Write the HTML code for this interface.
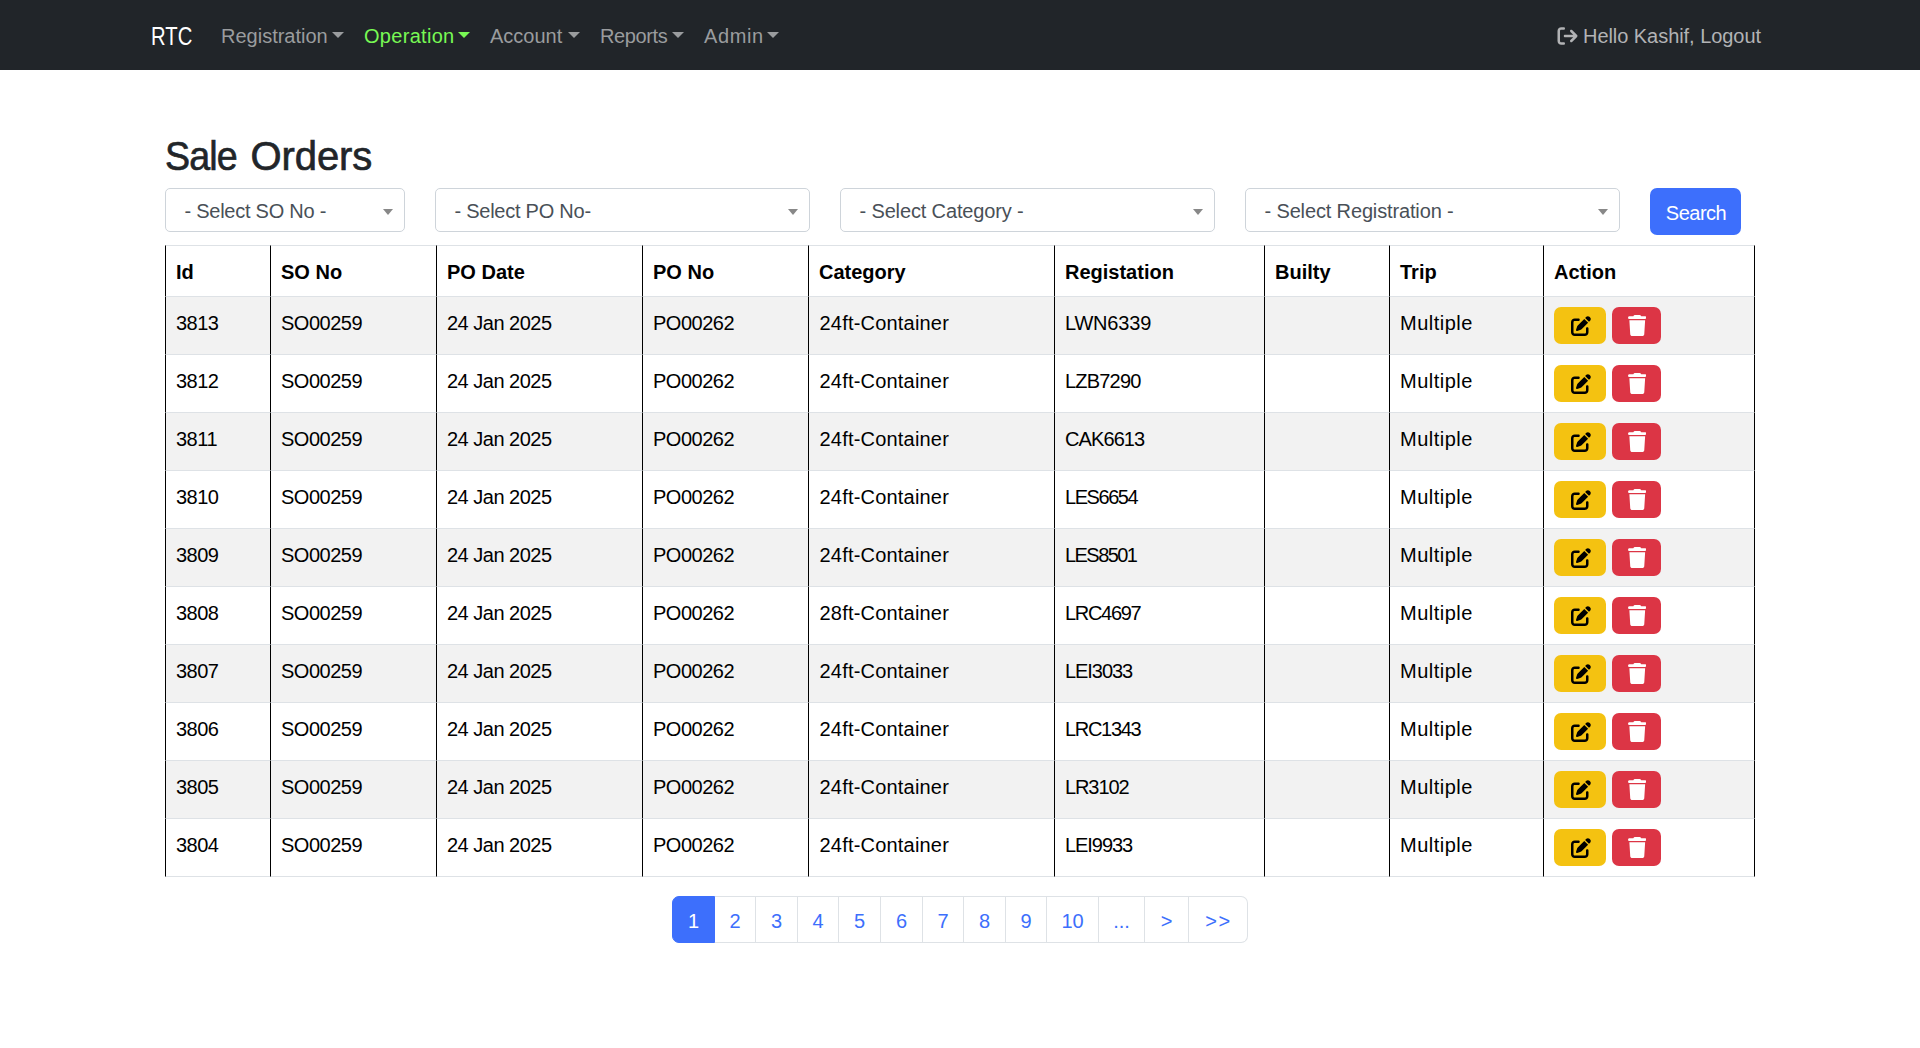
<!DOCTYPE html>
<html lang="en">
<head>
<meta charset="utf-8">
<title>Sale Orders</title>
<style>
*{box-sizing:border-box;}
html,body{margin:0;padding:0;}
body{width:1920px;height:1048px;overflow:hidden;background:#fff;color:#212529;
  font-family:"Liberation Sans",sans-serif;font-size:20px;line-height:30px;position:relative;}
a{text-decoration:none;color:inherit;}
/* ---------- navbar ---------- */
.navbar{position:absolute;left:0;top:0;width:1920px;height:70px;background:#212529;}
.navbar a{position:absolute;top:21px;height:30px;line-height:30px;white-space:nowrap;color:#9a9c9e;}
.navbar .brand{left:150.5px;top:17px;height:38px;line-height:38px;font-size:25px;color:#fff;transform:scaleX(.81);transform-origin:0 50%;}
.navbar .active{color:#78f954;}
.caret{display:inline-block;width:0;height:0;border-top:6px solid currentColor;border-left:6px solid transparent;border-right:6px solid transparent;margin-left:4px;vertical-align:5px;}
.navbar .logout{left:1557px;color:#b2b3b5;}
.navbar .logout svg{position:absolute;left:0;top:4.5px;width:21px;height:20px;fill:currentColor;}
.navbar .logout span{position:absolute;left:26px;top:0;letter-spacing:-.05px;}
/* ---------- heading ---------- */
h1{position:absolute;left:165px;top:132px;margin:0;font-size:40px;line-height:48px;font-weight:400;color:#212529;-webkit-text-stroke:.65px #212529;letter-spacing:0;white-space:nowrap;}
/* ---------- filters ---------- */
.sel{position:absolute;top:188px;height:44px;border:1px solid #ced4da;border-radius:5px;background:#fff;color:#495057;padding-left:18.5px;line-height:44px;white-space:nowrap;letter-spacing:-.14px;}
.sel i{position:absolute;right:11px;top:20px;width:0;height:0;border-top:6px solid #888;border-left:5px solid transparent;border-right:5px solid transparent;}
.btn-search{position:absolute;left:1650px;top:188px;width:91px;height:47px;border-radius:7px;background:#3d6ffc;color:#fff;text-align:center;line-height:51px;letter-spacing:-.5px;padding-left:1px;}
/* ---------- table ---------- */
table{position:absolute;left:165px;top:245px;width:1590px;border-collapse:separate;border-spacing:0;table-layout:fixed;color:#000;}
th,td{padding:0 0 0 10px;text-align:left;vertical-align:top;border-left:1px solid #000;border-bottom:1px solid #dee2e6;white-space:nowrap;overflow:hidden;}
th:last-child,td:last-child{border-right:1px solid #000;}
th{height:52px;border-top:1px solid #dee2e6;font-weight:700;padding-top:11px;}
td{height:58px;padding-top:11px;}
tbody tr:nth-child(odd) td{background:#f2f2f2;}
td:nth-child(-n+4){letter-spacing:-.5px;}
td:nth-child(5){letter-spacing:.2px;padding-left:10.5px;}
td:nth-child(8){letter-spacing:.5px;}
.b{display:inline-block;vertical-align:top;height:37px;border-radius:7px;margin-top:-1px;position:relative;}
.b svg{position:absolute;fill:currentColor;}
.b.e{width:52px;background:#f4c211;color:#000;margin-right:6px;}
.b.e svg{left:16.5px;top:8.5px;width:20px;height:20px;}
.b.d{width:49px;background:#dc3545;color:#fff;}
.b.d svg{left:15.5px;top:8px;width:18.5px;height:21px;}
/* ---------- pagination ---------- */
.pg{position:absolute;left:672px;top:896px;height:47px;margin:0;padding:0;list-style:none;display:flex;}
.pg li{height:47px;border:1px solid #dee2e6;border-left-width:0;color:#3d6ffc;text-align:center;line-height:49px;background:#fff;}
.pg li:first-child{border:1px solid #3d6ffc;background:#3d6ffc;color:#fff;border-radius:7px 0 0 7px;}
.pg li:last-child{border-radius:0 7px 7px 0;}
</style>
</head>
<body>
<nav class="navbar">
  <a class="brand" href="#">RTC</a>
  <a href="#" style="left:221px">Registration<b class="caret"></b></a>
  <a href="#" class="active" style="left:364px;letter-spacing:.3px">Operation<b class="caret" style="margin-left:3px"></b></a>
  <a href="#" style="left:490px">Account<b class="caret" style="margin-left:6px"></b></a>
  <a href="#" style="left:600px;letter-spacing:-.4px">Reports<b class="caret" style="margin-left:4.5px"></b></a>
  <a href="#" style="left:704px;letter-spacing:.6px">Admin<b class="caret" style="margin-left:3px"></b></a>
  <a href="#" class="logout"><svg viewBox="0 0 512 512"><path d="M502.6 278.6c12.500-12.500 12.500-32.800 0-45.300l-128-128c-12.500-12.500-32.800-12.500-45.300 0s-12.500 32.800 0 45.300L402.700 224 192 224c-17.700 0-32 14.300-32 32s14.300 32 32 32l210.700 0-73.400 73.400c-12.500 12.500-12.500 32.800 0 45.300s32.800 12.500 45.300 0l128-128zM160 96c17.700 0 32-14.300 32-32s-14.300-32-32-32L96 32C43 32 0 75 0 128L0 384c0 53 43 96 96 96l64 0c17.700 0 32-14.300 32-32s-14.300-32-32-32l-64 0c-17.700 0-32-14.300-32-32l0-256c0-17.700 14.300-32 32-32l64 0z"/></svg><span>Hello Kashif, Logout</span></a>
</nav>

<h1><span style="display:inline-block;letter-spacing:-.9px;transform:scaleX(.94);transform-origin:0 50%">Sale</span> <span style="letter-spacing:-.1px;margin-left:-2px">Orders</span></h1>

<div class="sel" style="left:165px;width:240px;letter-spacing:-.25px">- Select SO No -<i></i></div>
<div class="sel" style="left:435px;width:375px;letter-spacing:-.25px">- Select PO No-<i></i></div>
<div class="sel" style="left:840px;width:375px">- Select Category -<i></i></div>
<div class="sel" style="left:1245px;width:375px">- Select Registration -<i></i></div>
<a class="btn-search" href="#">Search</a>

<table>
<colgroup><col style="width:105px"><col style="width:166px"><col style="width:206px"><col style="width:166px"><col style="width:246px"><col style="width:210px"><col style="width:125px"><col style="width:154px"><col style="width:212px"></colgroup>
<thead><tr><th>Id</th><th>SO No</th><th>PO Date</th><th>PO No</th><th>Category</th><th>Registation</th><th>Builty</th><th>Trip</th><th>Action</th></tr></thead>
<tbody>
<tr><td>3813</td><td>SO00259</td><td>24 Jan 2025</td><td>PO00262</td><td>24ft-Container</td><td style="letter-spacing:-0.2px">LWN6339</td><td></td><td>Multiple</td><td><a class="b e" href="#"><svg viewBox="0 0 512 512"><path d="M471.6 21.7c-21.9-21.9-57.3-21.9-79.2 0L362.3 51.7l97.900 97.900 30.100-30.100c21.900-21.900 21.900-57.300 0-79.200L471.600 21.700zm-299.200 220c-6.100 6.100-10.800 13.600-13.500 21.900l-29.600 88.800c-2.900 8.600-.6 18.100 5.800 24.600s15.900 8.700 24.600 5.800l88.800-29.600c8.200-2.700 15.700-7.400 21.900-13.500L437.700 172.300 339.700 74.300 172.400 241.700zM96 64C43 64 0 107 0 160V416c0 53 43 96 96 96H352c53 0 96-43 96-96V320c0-17.700-14.300-32-32-32s-32 14.300-32 32v96c0 17.700-14.300 32-32 32H96c-17.700 0-32-14.300-32-32V160c0-17.700 14.300-32 32-32h96c17.700 0 32-14.300 32-32s-14.300-32-32-32H96z"/></svg></a><a class="b d" href="#"><svg viewBox="0 0 448 512"><path d="M135.2 17.7L128 32H32C14.300 32 0 46.300 0 64S14.300 96 32 96H416c17.700 0 32-14.300 32-32s-14.300-32-32-32H320l-7.200-14.300C307.400 6.800 296.300 0 284.200 0H163.800c-12.100 0-23.200 6.800-28.600 17.700zM416 128H32L53.200 467c1.600 25.300 22.600 45 47.900 45H346.900c25.300 0 46.300-19.700 47.900-45L416 128z"/></svg></a></td></tr>
<tr><td>3812</td><td>SO00259</td><td>24 Jan 2025</td><td>PO00262</td><td>24ft-Container</td><td style="letter-spacing:-0.8px">LZB7290</td><td></td><td>Multiple</td><td><a class="b e" href="#"><svg viewBox="0 0 512 512"><path d="M471.6 21.7c-21.9-21.9-57.3-21.9-79.2 0L362.3 51.7l97.900 97.900 30.100-30.100c21.900-21.900 21.900-57.300 0-79.200L471.600 21.700zm-299.200 220c-6.100 6.100-10.800 13.600-13.500 21.900l-29.600 88.800c-2.900 8.600-.6 18.100 5.800 24.600s15.900 8.700 24.600 5.800l88.800-29.600c8.200-2.700 15.700-7.400 21.900-13.500L437.700 172.300 339.700 74.300 172.400 241.700zM96 64C43 64 0 107 0 160V416c0 53 43 96 96 96H352c53 0 96-43 96-96V320c0-17.700-14.300-32-32-32s-32 14.300-32 32v96c0 17.700-14.300 32-32 32H96c-17.700 0-32-14.300-32-32V160c0-17.700 14.300-32 32-32h96c17.700 0 32-14.300 32-32s-14.300-32-32-32H96z"/></svg></a><a class="b d" href="#"><svg viewBox="0 0 448 512"><path d="M135.2 17.7L128 32H32C14.300 32 0 46.300 0 64S14.300 96 32 96H416c17.700 0 32-14.300 32-32s-14.300-32-32-32H320l-7.200-14.300C307.400 6.800 296.300 0 284.200 0H163.800c-12.100 0-23.200 6.800-28.600 17.700zM416 128H32L53.200 467c1.600 25.300 22.600 45 47.900 45H346.900c25.300 0 46.300-19.700 47.900-45L416 128z"/></svg></a></td></tr>
<tr><td>3811</td><td>SO00259</td><td>24 Jan 2025</td><td>PO00262</td><td>24ft-Container</td><td style="letter-spacing:-0.9px">CAK6613</td><td></td><td>Multiple</td><td><a class="b e" href="#"><svg viewBox="0 0 512 512"><path d="M471.6 21.7c-21.9-21.9-57.3-21.9-79.2 0L362.3 51.7l97.900 97.900 30.100-30.100c21.900-21.900 21.900-57.300 0-79.200L471.600 21.700zm-299.200 220c-6.100 6.100-10.800 13.600-13.500 21.900l-29.600 88.800c-2.900 8.600-.6 18.100 5.800 24.600s15.900 8.700 24.600 5.800l88.800-29.600c8.200-2.700 15.700-7.400 21.900-13.500L437.700 172.300 339.700 74.300 172.400 241.700zM96 64C43 64 0 107 0 160V416c0 53 43 96 96 96H352c53 0 96-43 96-96V320c0-17.700-14.300-32-32-32s-32 14.300-32 32v96c0 17.700-14.300 32-32 32H96c-17.700 0-32-14.300-32-32V160c0-17.700 14.300-32 32-32h96c17.700 0 32-14.300 32-32s-14.300-32-32-32H96z"/></svg></a><a class="b d" href="#"><svg viewBox="0 0 448 512"><path d="M135.2 17.7L128 32H32C14.300 32 0 46.300 0 64S14.300 96 32 96H416c17.700 0 32-14.300 32-32s-14.300-32-32-32H320l-7.200-14.300C307.400 6.800 296.300 0 284.200 0H163.800c-12.100 0-23.200 6.800-28.600 17.700zM416 128H32L53.200 467c1.600 25.300 22.600 45 47.900 45H346.900c25.300 0 46.300-19.700 47.900-45L416 128z"/></svg></a></td></tr>
<tr><td>3810</td><td>SO00259</td><td>24 Jan 2025</td><td>PO00262</td><td>24ft-Container</td><td style="letter-spacing:-1.45px">LES6654</td><td></td><td>Multiple</td><td><a class="b e" href="#"><svg viewBox="0 0 512 512"><path d="M471.6 21.7c-21.9-21.9-57.3-21.9-79.2 0L362.3 51.7l97.900 97.900 30.100-30.100c21.900-21.900 21.900-57.300 0-79.200L471.600 21.700zm-299.200 220c-6.100 6.100-10.800 13.600-13.500 21.900l-29.600 88.800c-2.900 8.600-.6 18.100 5.800 24.600s15.900 8.700 24.600 5.800l88.800-29.600c8.200-2.700 15.700-7.400 21.900-13.500L437.700 172.300 339.700 74.300 172.400 241.700zM96 64C43 64 0 107 0 160V416c0 53 43 96 96 96H352c53 0 96-43 96-96V320c0-17.700-14.300-32-32-32s-32 14.300-32 32v96c0 17.700-14.300 32-32 32H96c-17.700 0-32-14.300-32-32V160c0-17.700 14.300-32 32-32h96c17.700 0 32-14.300 32-32s-14.300-32-32-32H96z"/></svg></a><a class="b d" href="#"><svg viewBox="0 0 448 512"><path d="M135.2 17.7L128 32H32C14.300 32 0 46.300 0 64S14.300 96 32 96H416c17.700 0 32-14.300 32-32s-14.300-32-32-32H320l-7.200-14.300C307.400 6.800 296.300 0 284.200 0H163.800c-12.100 0-23.200 6.800-28.600 17.700zM416 128H32L53.200 467c1.600 25.300 22.600 45 47.900 45H346.900c25.300 0 46.300-19.700 47.900-45L416 128z"/></svg></a></td></tr>
<tr><td>3809</td><td>SO00259</td><td>24 Jan 2025</td><td>PO00262</td><td>24ft-Container</td><td style="letter-spacing:-1.55px">LES8501</td><td></td><td>Multiple</td><td><a class="b e" href="#"><svg viewBox="0 0 512 512"><path d="M471.6 21.7c-21.9-21.9-57.3-21.9-79.2 0L362.3 51.7l97.900 97.900 30.100-30.100c21.900-21.900 21.900-57.300 0-79.200L471.600 21.700zm-299.200 220c-6.100 6.100-10.800 13.600-13.500 21.900l-29.600 88.800c-2.900 8.600-.6 18.100 5.800 24.600s15.900 8.700 24.600 5.800l88.800-29.600c8.200-2.700 15.700-7.400 21.900-13.500L437.700 172.300 339.700 74.300 172.400 241.700zM96 64C43 64 0 107 0 160V416c0 53 43 96 96 96H352c53 0 96-43 96-96V320c0-17.700-14.300-32-32-32s-32 14.300-32 32v96c0 17.700-14.300 32-32 32H96c-17.700 0-32-14.300-32-32V160c0-17.700 14.300-32 32-32h96c17.700 0 32-14.300 32-32s-14.300-32-32-32H96z"/></svg></a><a class="b d" href="#"><svg viewBox="0 0 448 512"><path d="M135.2 17.7L128 32H32C14.300 32 0 46.300 0 64S14.300 96 32 96H416c17.700 0 32-14.300 32-32s-14.300-32-32-32H320l-7.200-14.300C307.400 6.800 296.300 0 284.200 0H163.800c-12.100 0-23.200 6.800-28.600 17.700zM416 128H32L53.200 467c1.600 25.300 22.600 45 47.900 45H346.900c25.300 0 46.300-19.700 47.900-45L416 128z"/></svg></a></td></tr>
<tr><td>3808</td><td>SO00259</td><td>24 Jan 2025</td><td>PO00262</td><td>28ft-Container</td><td style="letter-spacing:-1.3px">LRC4697</td><td></td><td>Multiple</td><td><a class="b e" href="#"><svg viewBox="0 0 512 512"><path d="M471.6 21.7c-21.9-21.9-57.3-21.9-79.2 0L362.3 51.7l97.900 97.900 30.100-30.100c21.900-21.900 21.900-57.300 0-79.200L471.600 21.700zm-299.200 220c-6.100 6.100-10.800 13.600-13.500 21.900l-29.600 88.800c-2.900 8.600-.6 18.100 5.800 24.600s15.900 8.700 24.600 5.800l88.800-29.600c8.200-2.700 15.700-7.400 21.900-13.500L437.700 172.300 339.700 74.300 172.400 241.700zM96 64C43 64 0 107 0 160V416c0 53 43 96 96 96H352c53 0 96-43 96-96V320c0-17.700-14.300-32-32-32s-32 14.300-32 32v96c0 17.700-14.300 32-32 32H96c-17.700 0-32-14.300-32-32V160c0-17.700 14.300-32 32-32h96c17.700 0 32-14.300 32-32s-14.300-32-32-32H96z"/></svg></a><a class="b d" href="#"><svg viewBox="0 0 448 512"><path d="M135.2 17.7L128 32H32C14.300 32 0 46.300 0 64S14.300 96 32 96H416c17.700 0 32-14.300 32-32s-14.300-32-32-32H320l-7.200-14.300C307.400 6.800 296.300 0 284.200 0H163.800c-12.100 0-23.200 6.800-28.600 17.700zM416 128H32L53.200 467c1.600 25.300 22.600 45 47.900 45H346.900c25.300 0 46.300-19.700 47.900-45L416 128z"/></svg></a></td></tr>
<tr><td>3807</td><td>SO00259</td><td>24 Jan 2025</td><td>PO00262</td><td>24ft-Container</td><td style="letter-spacing:-1.05px">LEI3033</td><td></td><td>Multiple</td><td><a class="b e" href="#"><svg viewBox="0 0 512 512"><path d="M471.6 21.7c-21.9-21.9-57.3-21.9-79.2 0L362.3 51.7l97.900 97.900 30.100-30.100c21.900-21.900 21.900-57.300 0-79.200L471.600 21.700zm-299.200 220c-6.100 6.100-10.800 13.600-13.500 21.900l-29.600 88.800c-2.900 8.600-.6 18.100 5.800 24.600s15.900 8.700 24.600 5.800l88.800-29.600c8.200-2.700 15.700-7.400 21.900-13.500L437.700 172.300 339.700 74.300 172.400 241.700zM96 64C43 64 0 107 0 160V416c0 53 43 96 96 96H352c53 0 96-43 96-96V320c0-17.700-14.300-32-32-32s-32 14.300-32 32v96c0 17.700-14.300 32-32 32H96c-17.700 0-32-14.300-32-32V160c0-17.700 14.300-32 32-32h96c17.700 0 32-14.300 32-32s-14.300-32-32-32H96z"/></svg></a><a class="b d" href="#"><svg viewBox="0 0 448 512"><path d="M135.2 17.7L128 32H32C14.300 32 0 46.300 0 64S14.300 96 32 96H416c17.700 0 32-14.300 32-32s-14.300-32-32-32H320l-7.200-14.300C307.400 6.800 296.300 0 284.200 0H163.800c-12.100 0-23.200 6.800-28.600 17.700zM416 128H32L53.200 467c1.600 25.300 22.600 45 47.900 45H346.900c25.300 0 46.300-19.700 47.900-45L416 128z"/></svg></a></td></tr>
<tr><td>3806</td><td>SO00259</td><td>24 Jan 2025</td><td>PO00262</td><td>24ft-Container</td><td style="letter-spacing:-1.3px">LRC1343</td><td></td><td>Multiple</td><td><a class="b e" href="#"><svg viewBox="0 0 512 512"><path d="M471.6 21.7c-21.9-21.9-57.3-21.9-79.2 0L362.3 51.7l97.900 97.900 30.100-30.100c21.900-21.900 21.900-57.300 0-79.200L471.600 21.700zm-299.200 220c-6.100 6.100-10.800 13.600-13.500 21.900l-29.600 88.800c-2.900 8.600-.6 18.100 5.800 24.600s15.900 8.700 24.600 5.800l88.800-29.600c8.200-2.700 15.700-7.400 21.900-13.500L437.700 172.300 339.700 74.300 172.400 241.700zM96 64C43 64 0 107 0 160V416c0 53 43 96 96 96H352c53 0 96-43 96-96V320c0-17.700-14.300-32-32-32s-32 14.300-32 32v96c0 17.700-14.300 32-32 32H96c-17.700 0-32-14.300-32-32V160c0-17.700 14.300-32 32-32h96c17.700 0 32-14.300 32-32s-14.300-32-32-32H96z"/></svg></a><a class="b d" href="#"><svg viewBox="0 0 448 512"><path d="M135.2 17.7L128 32H32C14.300 32 0 46.300 0 64S14.300 96 32 96H416c17.700 0 32-14.300 32-32s-14.300-32-32-32H320l-7.200-14.300C307.400 6.800 296.300 0 284.200 0H163.800c-12.100 0-23.200 6.800-28.600 17.700zM416 128H32L53.200 467c1.600 25.300 22.600 45 47.900 45H346.900c25.300 0 46.300-19.700 47.900-45L416 128z"/></svg></a></td></tr>
<tr><td>3805</td><td>SO00259</td><td>24 Jan 2025</td><td>PO00262</td><td>24ft-Container</td><td style="letter-spacing:-1.1px">LR3102</td><td></td><td>Multiple</td><td><a class="b e" href="#"><svg viewBox="0 0 512 512"><path d="M471.6 21.7c-21.9-21.9-57.3-21.9-79.2 0L362.3 51.7l97.900 97.900 30.100-30.100c21.900-21.900 21.900-57.300 0-79.200L471.600 21.700zm-299.200 220c-6.100 6.100-10.800 13.600-13.500 21.900l-29.600 88.800c-2.900 8.600-.6 18.100 5.800 24.600s15.900 8.700 24.600 5.800l88.800-29.600c8.200-2.700 15.700-7.400 21.900-13.500L437.700 172.300 339.700 74.300 172.400 241.700zM96 64C43 64 0 107 0 160V416c0 53 43 96 96 96H352c53 0 96-43 96-96V320c0-17.700-14.300-32-32-32s-32 14.300-32 32v96c0 17.700-14.300 32-32 32H96c-17.700 0-32-14.300-32-32V160c0-17.700 14.300-32 32-32h96c17.700 0 32-14.300 32-32s-14.300-32-32-32H96z"/></svg></a><a class="b d" href="#"><svg viewBox="0 0 448 512"><path d="M135.2 17.7L128 32H32C14.300 32 0 46.300 0 64S14.300 96 32 96H416c17.700 0 32-14.300 32-32s-14.300-32-32-32H320l-7.200-14.300C307.400 6.800 296.300 0 284.200 0H163.800c-12.100 0-23.200 6.800-28.600 17.700zM416 128H32L53.200 467c1.600 25.300 22.600 45 47.900 45H346.900c25.300 0 46.300-19.700 47.900-45L416 128z"/></svg></a></td></tr>
<tr><td>3804</td><td>SO00259</td><td>24 Jan 2025</td><td>PO00262</td><td>24ft-Container</td><td style="letter-spacing:-1.05px">LEI9933</td><td></td><td>Multiple</td><td><a class="b e" href="#"><svg viewBox="0 0 512 512"><path d="M471.6 21.7c-21.9-21.9-57.3-21.9-79.2 0L362.3 51.7l97.900 97.900 30.100-30.100c21.900-21.900 21.900-57.300 0-79.200L471.600 21.700zm-299.200 220c-6.100 6.100-10.800 13.600-13.500 21.900l-29.600 88.800c-2.900 8.600-.6 18.100 5.800 24.600s15.900 8.700 24.600 5.800l88.800-29.600c8.200-2.700 15.700-7.400 21.900-13.500L437.700 172.300 339.700 74.300 172.400 241.700zM96 64C43 64 0 107 0 160V416c0 53 43 96 96 96H352c53 0 96-43 96-96V320c0-17.700-14.300-32-32-32s-32 14.300-32 32v96c0 17.700-14.300 32-32 32H96c-17.700 0-32-14.300-32-32V160c0-17.700 14.300-32 32-32h96c17.700 0 32-14.300 32-32s-14.300-32-32-32H96z"/></svg></a><a class="b d" href="#"><svg viewBox="0 0 448 512"><path d="M135.2 17.7L128 32H32C14.300 32 0 46.300 0 64S14.300 96 32 96H416c17.700 0 32-14.300 32-32s-14.300-32-32-32H320l-7.200-14.300C307.400 6.800 296.300 0 284.200 0H163.800c-12.100 0-23.200 6.800-28.600 17.700zM416 128H32L53.200 467c1.600 25.300 22.600 45 47.900 45H346.900c25.300 0 46.300-19.700 47.900-45L416 128z"/></svg></a></td></tr>
</tbody>
</table>

<ul class="pg">
  <li style="width:43px">1</li><li style="width:41px">2</li><li style="width:42px">3</li><li style="width:41px">4</li><li style="width:42px">5</li><li style="width:42px">6</li><li style="width:41px">7</li><li style="width:42px">8</li><li style="width:41px">9</li><li style="width:52px">10</li><li style="width:46px">...</li><li style="width:44px">&gt;</li><li style="width:59px;letter-spacing:1.5px;padding-left:1px">&gt;&gt;</li>
</ul>

</body>
</html>
